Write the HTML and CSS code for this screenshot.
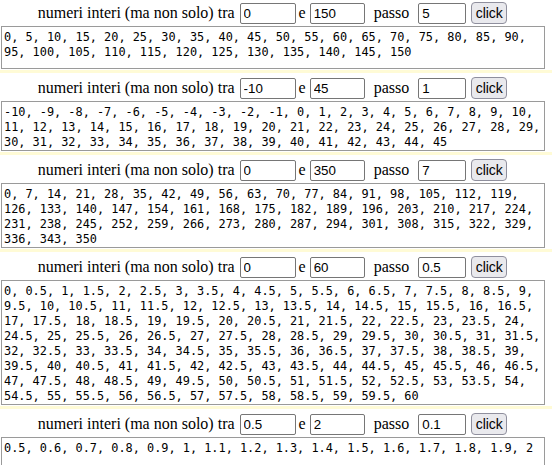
FILE: index.html
```html
<!DOCTYPE html>
<html lang="it">
<head>
<meta charset="utf-8">
<title>numeri</title>
<link rel="stylesheet" href="styles.css">
</head>
<body>
<section class="block">
  <form class="bar">
    <span class="lbl">numeri interi (ma non solo) tra</span>
    <input class="num from" type="text" value="0">
    <span class="lbl e">e</span>
    <input class="num to" type="text" value="150">
    <span class="lbl passo">passo</span>
    <input class="num step" type="text" value="5">
    <button class="btn" type="button">click</button>
  </form>
  <div class="out">0, 5, 10, 15, 20, 25, 30, 35, 40, 45, 50, 55, 60, 65, 70, 75, 80, 85, 90, 95, 100, 105, 110, 115, 120, 125, 130, 135, 140, 145, 150</div>
</section>
<div class="sep"></div>

<section class="block">
  <form class="bar">
    <span class="lbl">numeri interi (ma non solo) tra</span>
    <input class="num from" type="text" value="-10">
    <span class="lbl e">e</span>
    <input class="num to" type="text" value="45">
    <span class="lbl passo">passo</span>
    <input class="num step" type="text" value="1">
    <button class="btn" type="button">click</button>
  </form>
  <div class="out">-10, -9, -8, -7, -6, -5, -4, -3, -2, -1, 0, 1, 2, 3, 4, 5, 6, 7, 8, 9, 10, 11, 12, 13, 14, 15, 16, 17, 18, 19, 20, 21, 22, 23, 24, 25, 26, 27, 28, 29, 30, 31, 32, 33, 34, 35, 36, 37, 38, 39, 40, 41, 42, 43, 44, 45</div>
</section>
<div class="sep"></div>

<section class="block">
  <form class="bar">
    <span class="lbl">numeri interi (ma non solo) tra</span>
    <input class="num from" type="text" value="0">
    <span class="lbl e">e</span>
    <input class="num to" type="text" value="350">
    <span class="lbl passo">passo</span>
    <input class="num step" type="text" value="7">
    <button class="btn" type="button">click</button>
  </form>
  <div class="out">0, 7, 14, 21, 28, 35, 42, 49, 56, 63, 70, 77, 84, 91, 98, 105, 112, 119, 126, 133, 140, 147, 154, 161, 168, 175, 182, 189, 196, 203, 210, 217, 224, 231, 238, 245, 252, 259, 266, 273, 280, 287, 294, 301, 308, 315, 322, 329, 336, 343, 350</div>
</section>
<div class="sep"></div>

<section class="block">
  <form class="bar">
    <span class="lbl">numeri interi (ma non solo) tra</span>
    <input class="num from" type="text" value="0">
    <span class="lbl e">e</span>
    <input class="num to" type="text" value="60">
    <span class="lbl passo">passo</span>
    <input class="num step" type="text" value="0.5">
    <button class="btn" type="button">click</button>
  </form>
  <div class="out">0, 0.5, 1, 1.5, 2, 2.5, 3, 3.5, 4, 4.5, 5, 5.5, 6, 6.5, 7, 7.5, 8, 8.5, 9, 9.5, 10, 10.5, 11, 11.5, 12, 12.5, 13, 13.5, 14, 14.5, 15, 15.5, 16, 16.5, 17, 17.5, 18, 18.5, 19, 19.5, 20, 20.5, 21, 21.5, 22, 22.5, 23, 23.5, 24, 24.5, 25, 25.5, 26, 26.5, 27, 27.5, 28, 28.5, 29, 29.5, 30, 30.5, 31, 31.5, 32, 32.5, 33, 33.5, 34, 34.5, 35, 35.5, 36, 36.5, 37, 37.5, 38, 38.5, 39, 39.5, 40, 40.5, 41, 41.5, 42, 42.5, 43, 43.5, 44, 44.5, 45, 45.5, 46, 46.5, 47, 47.5, 48, 48.5, 49, 49.5, 50, 50.5, 51, 51.5, 52, 52.5, 53, 53.5, 54, 54.5, 55, 55.5, 56, 56.5, 57, 57.5, 58, 58.5, 59, 59.5, 60</div>
</section>
<div class="sep"></div>

<section class="block">
  <form class="bar">
    <span class="lbl">numeri interi (ma non solo) tra</span>
    <input class="num from" type="text" value="0.5">
    <span class="lbl e">e</span>
    <input class="num to" type="text" value="2">
    <span class="lbl passo">passo</span>
    <input class="num step" type="text" value="0.1">
    <button class="btn" type="button">click</button>
  </form>
  <div class="out">0.5, 0.6, 0.7, 0.8, 0.9, 1, 1.1, 1.2, 1.3, 1.4, 1.5, 1.6, 1.7, 1.8, 1.9, 2</div>
</section>
<div class="sep"></div>
</body>
</html>
```
FILE: styles.css
```css
html, body {
  margin: 0;
  padding: 0;
  background: #ffffff;
  color: #000000;
}

body {
  font-family: "Liberation Serif", "Times New Roman", serif;
  font-size: 16px;
}

.block {
  margin-right: 7px;
}

.bar {
  display: flex;
  justify-content: center;
  align-items: center;
  height: 26px;
  margin: 0;
}

.lbl {
  font-family: "Liberation Serif", "Times New Roman", serif;
  font-size: 16px;
  white-space: nowrap;
}

.e {
  margin: 0 4px 0 3px;
}

.passo {
  margin: 0 9px;
}

.num {
  box-sizing: border-box;
  height: 21px;
  margin: 0;
  padding: 1px 3px;
  border: 1px solid #767676;
  border-radius: 2px;
  font-family: "Liberation Sans", Arial, sans-serif;
  font-size: 13.33px;
  color: #000000;
  background: #ffffff;
}

.from {
  width: 56px;
  margin-left: 5px;
}

.to {
  width: 55px;
}

.step {
  width: 48px;
}

.btn {
  box-sizing: border-box;
  height: 22px;
  width: 36px;
  margin: 0 0 0 5px;
  padding: 0;
  border: 1px solid #8f8f9d;
  border-radius: 4px;
  background: #e9e9ed;
  font-family: "Liberation Sans", Arial, sans-serif;
  font-size: 14px;
  color: #000000;
}

.out {
  margin-left: 1px;
  border: 1px solid #9a9a9a;
  padding: 3px 2px 0 2px;
  min-height: 38px;
  font-family: "DejaVu Sans Mono", "Liberation Mono", monospace;
  font-size: 11.88px;
  line-height: 15px;
}

.sep {
  height: 3px;
  margin: 1px 0 2px;
  background: #fffbd6;
}
```
